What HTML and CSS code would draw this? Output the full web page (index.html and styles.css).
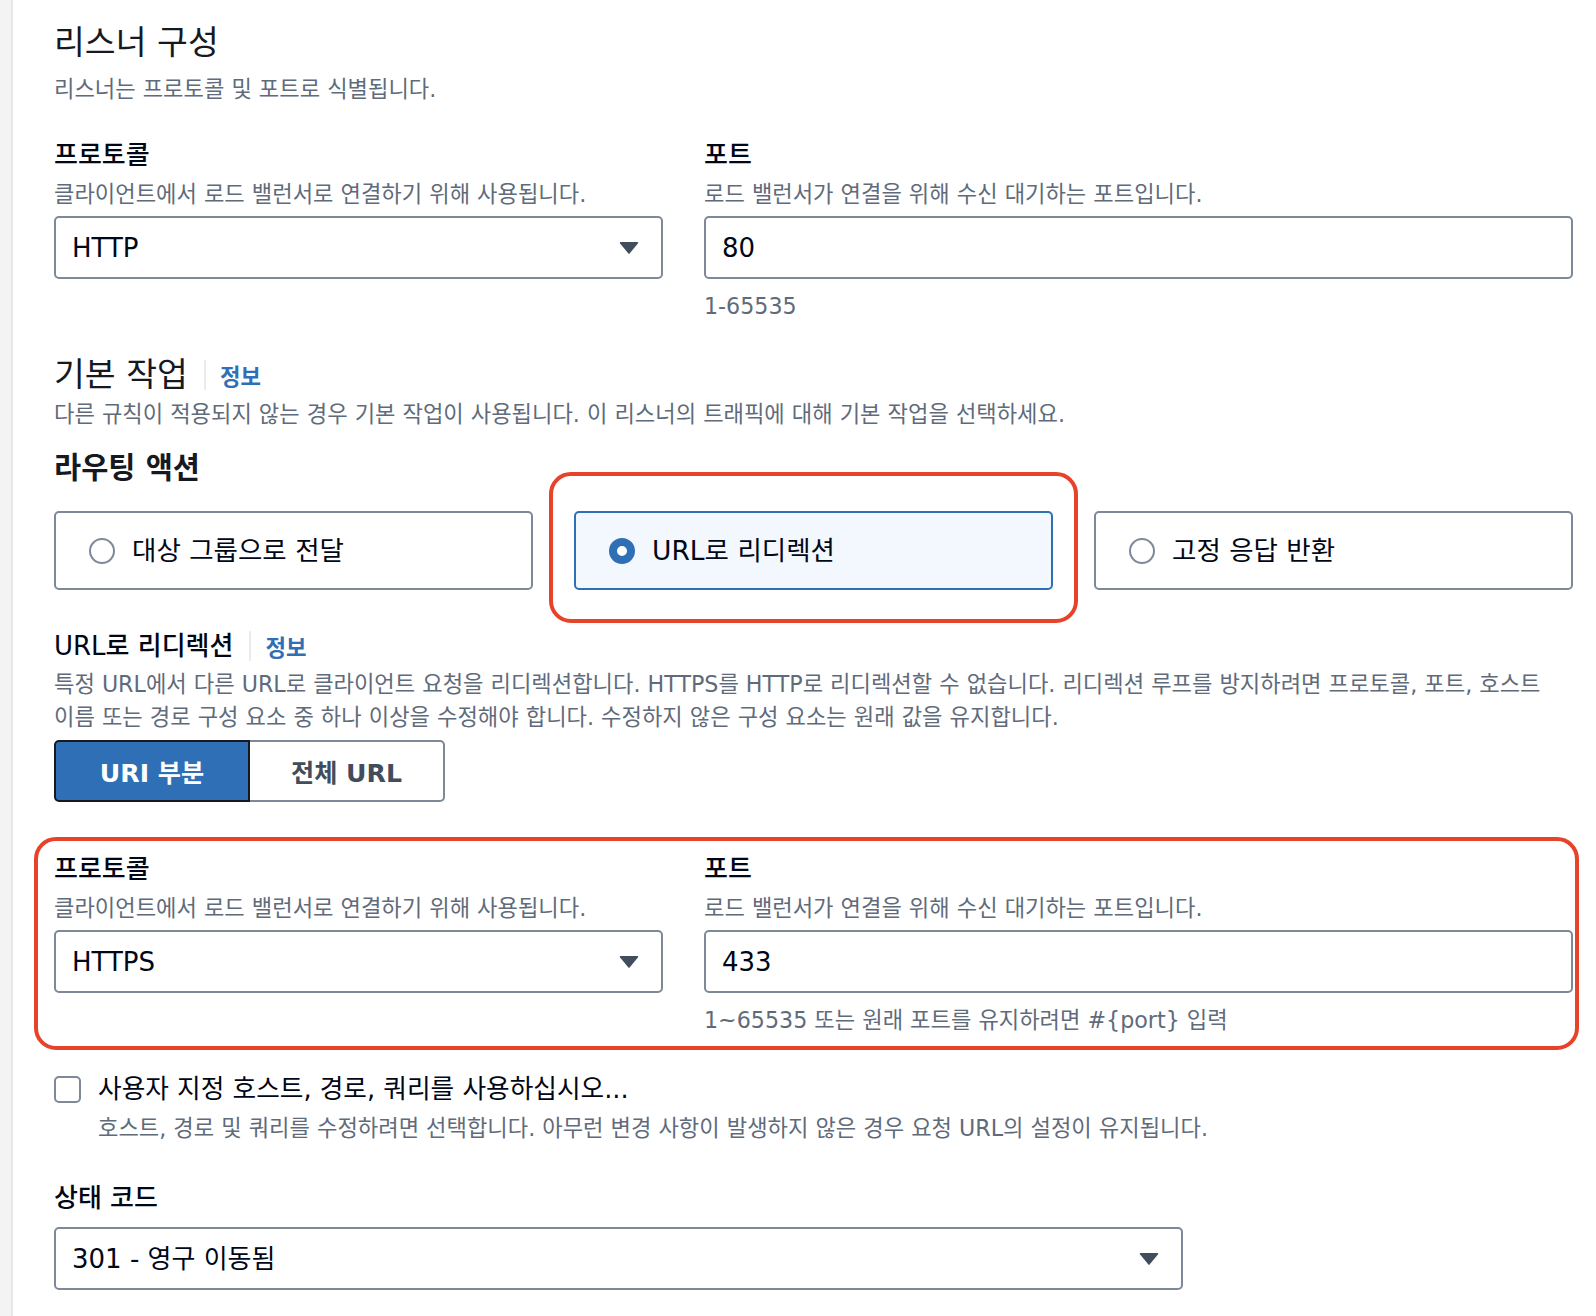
FILE: index.html
```html
<!DOCTYPE html>
<html lang="ko">
<head>
<meta charset="utf-8">
<title>리스너 구성</title>
<link rel="stylesheet" href="styles.css">
</head>
<body>
<div class="page">
  <div class="rail"></div>
  <main class="content">
    <h2 class="title">리스너 구성</h2>
    <p class="desc intro-desc">리스너는 프로토콜 및 포트로 식별됩니다.</p>

    <div class="fields first-fields">
      <div class="field">
        <div class="label">프로토콜</div>
        <div class="desc field-desc">클라이언트에서 로드 밸런서로 연결하기 위해 사용됩니다.</div>
        <div class="control">
          <span class="value">HTTP</span>
          <svg class="caret" width="20" height="14" viewBox="0 0 20 14"><path d="M1.5 1h17a.8.8 0 0 1 .6 1.3L10.6 12.6a.8.8 0 0 1-1.2 0L.9 2.3A.8.8 0 0 1 1.5 1z" fill="#414d5c"/></svg>
        </div>
      </div>
      <div class="field">
        <div class="label">포트</div>
        <div class="desc field-desc">로드 밸런서가 연결을 위해 수신 대기하는 포트입니다.</div>
        <div class="control"><span class="value">80</span></div>
        <div class="desc helper">1-65535</div>
      </div>
    </div>

    <div class="section-head">
      <h2 class="title">기본 작업</h2>
      <span class="divider"></span>
      <span class="info">정보</span>
    </div>
    <p class="desc section-desc">다른 규칙이 적용되지 않는 경우 기본 작업이 사용됩니다. 이 리스너의 트래픽에 대해 기본 작업을 선택하세요.</p>

    <h3 class="routing-title">라우팅 액션</h3>
    <div class="cards">
      <div class="card"><span class="radio"></span><span class="card-label">대상 그룹으로 전달</span></div>
      <div class="card selected"><span class="radio checked"></span><span class="card-label">URL로 리디렉션</span><span class="highlight card-highlight"></span></div>
      <div class="card"><span class="radio"></span><span class="card-label">고정 응답 반환</span></div>
    </div>

    <div class="sub-head">
      <h3 class="sub-title">URL로 리디렉션</h3>
      <span class="divider"></span>
      <span class="info">정보</span>
    </div>
    <p class="desc redirect-desc">특정 URL에서 다른 URL로 클라이언트 요청을 리디렉션합니다. HTTPS를 HTTP로 리디렉션할 수 없습니다. 리디렉션 루프를 방지하려면 프로토콜, 포트, 호스트<br>이름 또는 경로 구성 요소 중 하나 이상을 수정해야 합니다. 수정하지 않은 구성 요소는 원래 값을 유지합니다.</p>

    <div class="segmented">
      <span class="seg active">URI 부분</span>
      <span class="seg inactive">전체 URL</span>
    </div>

    <div class="fields second-fields">
      <div class="field">
        <div class="label">프로토콜</div>
        <div class="desc field-desc">클라이언트에서 로드 밸런서로 연결하기 위해 사용됩니다.</div>
        <div class="control">
          <span class="value">HTTPS</span>
          <svg class="caret" width="20" height="14" viewBox="0 0 20 14"><path d="M1.5 1h17a.8.8 0 0 1 .6 1.3L10.6 12.6a.8.8 0 0 1-1.2 0L.9 2.3A.8.8 0 0 1 1.5 1z" fill="#414d5c"/></svg>
        </div>
      </div>
      <div class="field">
        <div class="label">포트</div>
        <div class="desc field-desc">로드 밸런서가 연결을 위해 수신 대기하는 포트입니다.</div>
        <div class="control"><span class="value">433</span></div>
        <div class="desc helper">1~65535 또는 원래 포트를 유지하려면 #{port} 입력</div>
      </div>
      <span class="highlight fields-highlight"></span>
    </div>

    <div class="check-row">
      <span class="checkbox"></span>
      <span class="check-label">사용자 지정 호스트, 경로, 쿼리를 사용하십시오...</span>
    </div>
    <p class="desc check-desc">호스트, 경로 및 쿼리를 수정하려면 선택합니다. 아무런 변경 사항이 발생하지 않은 경우 요청 URL의 설정이 유지됩니다.</p>

    <div class="label status-label">상태 코드</div>
    <div class="control status-select">
      <span class="value">301 - 영구 이동됨</span>
      <svg class="caret" width="20" height="14" viewBox="0 0 20 14"><path d="M1.5 1h17a.8.8 0 0 1 .6 1.3L10.6 12.6a.8.8 0 0 1-1.2 0L.9 2.3A.8.8 0 0 1 1.5 1z" fill="#414d5c"/></svg>
    </div>
  </main>
</div>
</body>
</html>
```

FILE: styles.css
```css
html, body {
  margin: 0;
  padding: 0;
  background: #ffffff;
}

body {
  font-family: "DejaVu Sans", "Noto Sans CJK KR", sans-serif;
  color: #000716;
}

.page {
  display: flex;
  min-height: 1316px;
}

.rail {
  flex: none;
  width: 11px;
  background: #f3f3f4;
  border-right: 2px solid #e4e6e8;
}

.content {
  flex: 1;
  padding: 23px 23px 0 41px;
  min-width: 0;
}

.title {
  margin: 0;
  font-size: 33.5px;
  line-height: 40px;
  font-weight: 400;
  color: #16191f;
}

.desc {
  margin: 0;
  font-size: 22.2px;
  line-height: 32px;
  color: #5f6b7a;
}

.intro-desc {
  margin-top: 10px;
}

.fields {
  display: grid;
  grid-template-columns: 609px 1fr;
  column-gap: 41px;
  align-items: start;
}

.first-fields {
  margin-top: 33px;
}

.label {
  font-size: 26px;
  line-height: 34px;
  font-weight: 500;
  color: #000716;
}

.field-desc {
  margin-top: 6px;
}

.control {
  margin-top: 6px;
  height: 63px;
  box-sizing: border-box;
  border: 2px solid #7d8998;
  border-radius: 5px;
  background: #ffffff;
  display: flex;
  align-items: center;
  justify-content: space-between;
  padding: 0 22px 0 16px;
}

.value {
  font-size: 26px;
  line-height: 34px;
  color: #000716;
}

.caret {
  flex: none;
  display: block;
}

.helper {
  margin-top: 11px;
}

.section-head {
  margin-top: 33px;
  display: flex;
  align-items: center;
}

.divider {
  width: 2px;
  height: 30px;
  background: #e9ebed;
  margin: 0 14px 0 16px;
}

.info {
  font-size: 22.3px;
  line-height: 30px;
  font-weight: 700;
  color: #2f6fb6;
  padding-top: 4px;
}

.section-desc {
  margin-top: 3px;
}

.routing-title {
  margin: 20px 0 0;
  font-size: 29.5px;
  line-height: 36px;
  font-weight: 700;
  color: #16191f;
}

.cards {
  margin-top: 25px;
  display: grid;
  grid-template-columns: repeat(3, 1fr);
  column-gap: 41px;
}

.card {
  position: relative;
  height: 79px;
  box-sizing: border-box;
  border: 2px solid #7d8998;
  border-radius: 5px;
  background: #ffffff;
  display: flex;
  align-items: center;
  padding-left: 33px;
}

.card.selected {
  background: #f2f8fd;
  border-color: #2f6fb6;
}

.radio {
  flex: none;
  width: 26px;
  height: 26px;
  box-sizing: border-box;
  border: 2px solid #7d8998;
  border-radius: 50%;
  background: #ffffff;
  margin-right: 17px;
}

.radio.checked {
  border: 8px solid #2f6fb6;
}

.card-label {
  font-size: 26.5px;
  line-height: 34px;
  color: #000716;
}

.highlight {
  position: absolute;
  border: 4px solid #e6432b;
  border-radius: 22px;
  pointer-events: none;
}

.card-highlight {
  top: -41px;
  left: -27px;
  right: -27px;
  bottom: -35px;
}

.sub-head {
  margin-top: 38px;
  display: flex;
  align-items: center;
}

.sub-title {
  margin: 0;
  font-size: 26px;
  line-height: 36px;
  font-weight: 500;
  color: #000716;
}

.redirect-desc {
  margin-top: 4px;
  line-height: 33px;
}

.segmented {
  margin-top: 6px;
  display: inline-flex;
  height: 62px;
}

.seg {
  box-sizing: border-box;
  height: 62px;
  display: flex;
  align-items: center;
  justify-content: center;
  font-size: 25.2px;
  font-weight: 700;
}

.seg.active {
  width: 196px;
  background: #2f6fb6;
  color: #ffffff;
  border: 2px solid #16191f;
  border-radius: 5px 0 0 5px;
}

.seg.inactive {
  width: 195px;
  background: #ffffff;
  color: #414d5c;
  border: 2px solid #7d8998;
  border-left: none;
  border-radius: 0 5px 5px 0;
}

.second-fields {
  position: relative;
  margin-top: 50px;
}

.fields-highlight {
  top: -15px;
  left: -20px;
  right: -6px;
  bottom: -14px;
}

.check-row {
  margin-top: 36px;
  display: flex;
  align-items: center;
}

.checkbox {
  flex: none;
  width: 27px;
  height: 27px;
  box-sizing: border-box;
  border: 2px solid #7d8998;
  border-radius: 5px;
  background: #ffffff;
  margin-right: 17px;
}

.check-label {
  font-size: 25.7px;
  line-height: 34px;
  color: #000716;
}

.check-desc {
  margin-top: 6px;
  padding-left: 44px;
}

.status-label {
  margin-top: 37px;
}

.status-select {
  width: 1129px;
  margin-top: 12px;
}
```
